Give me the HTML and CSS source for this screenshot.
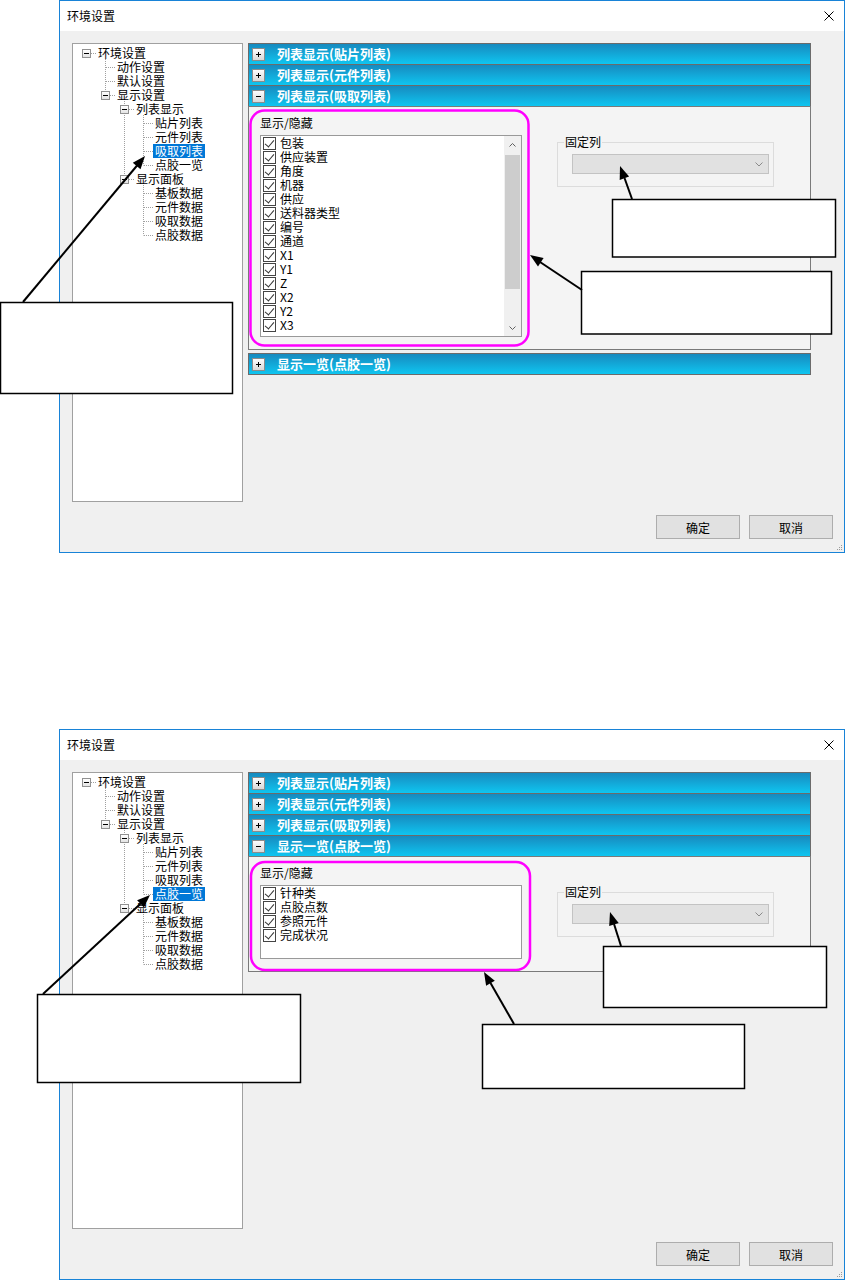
FILE: index.html
```html
<!DOCTYPE html>
<html lang="zh-CN">
<head>
<meta charset="utf-8">
<title>环境设置</title>
<link rel="stylesheet" href="styles.css">
</head>
<body>
<div class="page">

  <section class="dialog">
    <header class="titlebar">
      <span class="title">环境设置</span>
      <svg class="close" width="10" height="10" viewBox="0 0 10 10"><path d="M0.5 0.5L9.5 9.5M9.5 0.5L0.5 9.5" stroke="#000" stroke-width="1"/></svg>
    </header>
    <div class="client">
      <div class="main">
        <div class="tree">
          <svg class="tree-lines" width="169" height="200" viewBox="0 0 169 200">
            <path d="M18 9.5H23M32.5 15V47M33 23.5H42M33 37.5H42M37 51.5H42M51.5 57V131M56 65.5H61M56 135.5H61M70.5 71V121.5M71 79.5H80M71 93.5H80M71 107.5H80M71 121.5H80M70.5 141V191.5M71 149.5H80M71 163.5H80M71 177.5H80M71 191.5H80" stroke="#a0a0a0" stroke-width="1" stroke-dasharray="1 1" fill="none"/>
          </svg>
          <div class="node l0"><span class="twist"><i class="exp"></i></span><span class="label">环境设置</span></div>
          <div class="node l1"><span class="twist"></span><span class="label">动作设置</span></div>
          <div class="node l1"><span class="twist"></span><span class="label">默认设置</span></div>
          <div class="node l1"><span class="twist"><i class="exp"></i></span><span class="label">显示设置</span></div>
          <div class="node l2"><span class="twist"><i class="exp"></i></span><span class="label">列表显示</span></div>
          <div class="node l3"><span class="twist"></span><span class="label">贴片列表</span></div>
          <div class="node l3"><span class="twist"></span><span class="label">元件列表</span></div>
          <div class="node l3"><span class="twist"></span><span class="label sel">吸取列表</span></div>
          <div class="node l3"><span class="twist"></span><span class="label">点胶一览</span></div>
          <div class="node l2"><span class="twist"><i class="exp"></i></span><span class="label">显示面板</span></div>
          <div class="node l3"><span class="twist"></span><span class="label">基板数据</span></div>
          <div class="node l3"><span class="twist"></span><span class="label">元件数据</span></div>
          <div class="node l3"><span class="twist"></span><span class="label">吸取数据</span></div>
          <div class="node l3"><span class="twist"></span><span class="label">点胶数据</span></div>
        </div>
        <div class="accordion">
          <div class="acc-head"><span class="tog plus"></span><span class="acc-title">列表显示(贴片列表)</span></div>
          <div class="acc-head"><span class="tog plus"></span><span class="acc-title">列表显示(元件列表)</span></div>
          <div class="acc-head"><span class="tog"></span><span class="acc-title">列表显示(吸取列表)</span></div>
          <div class="acc-body">
            <div class="col">
              <div class="cap">显示/隐藏</div>
              <div class="listbox tall">
                <ul class="items">
                  <li><span class="cb"></span>包装</li>
                  <li><span class="cb"></span>供应装置</li>
                  <li><span class="cb"></span>角度</li>
                  <li><span class="cb"></span>机器</li>
                  <li><span class="cb"></span>供应</li>
                  <li><span class="cb"></span>送料器类型</li>
                  <li><span class="cb"></span>编号</li>
                  <li><span class="cb"></span>通道</li>
                  <li><span class="cb"></span>X1</li>
                  <li><span class="cb"></span>Y1</li>
                  <li><span class="cb"></span>Z</li>
                  <li><span class="cb"></span>X2</li>
                  <li><span class="cb"></span>Y2</li>
                  <li><span class="cb"></span>X3</li>
                </ul>
                <div class="vscroll">
                  <div class="sb-btn"><svg width="7" height="4" viewBox="0 0 7 4"><path d="M0.5 3.5L3.5 0.5L6.5 3.5" stroke="#606060" fill="none"/></svg></div>
                  <div class="thumb"></div>
                  <div class="sb-fill"></div>
                  <div class="sb-btn"><svg width="7" height="4" viewBox="0 0 7 4"><path d="M0.5 0.5L3.5 3.5L6.5 0.5" stroke="#606060" fill="none"/></svg></div>
                </div>
              </div>
            </div>
            <fieldset class="group">
              <legend>固定列</legend>
              <div class="combo"><svg width="8" height="5" viewBox="0 0 8 5"><path d="M0.5 0.5L4 4L7.5 0.5" stroke="#8a8a8a" fill="none"/></svg></div>
            </fieldset>
          </div>
          <div class="acc-head last"><span class="tog plus"></span><span class="acc-title">显示一览(点胶一览)</span></div>
        </div>
      </div>
      <div class="footer"><button class="btn">确定</button><button class="btn">取消</button></div>
    </div>
    <svg class="grip" width="6" height="6" viewBox="0 0 6 6"><path d="M4 0h1v1H4zM2 2h1v1H2zM4 2h1v1H4zM0 4h1v1H0zM2 4h1v1H2zM4 4h1v1H4z" fill="#9a9a9a"/></svg>
  </section>

  <section class="dialog second">
    <header class="titlebar">
      <span class="title">环境设置</span>
      <svg class="close" width="10" height="10" viewBox="0 0 10 10"><path d="M0.5 0.5L9.5 9.5M9.5 0.5L0.5 9.5" stroke="#000" stroke-width="1"/></svg>
    </header>
    <div class="client">
      <div class="main">
        <div class="tree">
          <svg class="tree-lines" width="169" height="200" viewBox="0 0 169 200">
            <path d="M18 9.5H23M32.5 15V47M33 23.5H42M33 37.5H42M37 51.5H42M51.5 57V131M56 65.5H61M56 135.5H61M70.5 71V121.5M71 79.5H80M71 93.5H80M71 107.5H80M71 121.5H80M70.5 141V191.5M71 149.5H80M71 163.5H80M71 177.5H80M71 191.5H80" stroke="#a0a0a0" stroke-width="1" stroke-dasharray="1 1" fill="none"/>
          </svg>
          <div class="node l0"><span class="twist"><i class="exp"></i></span><span class="label">环境设置</span></div>
          <div class="node l1"><span class="twist"></span><span class="label">动作设置</span></div>
          <div class="node l1"><span class="twist"></span><span class="label">默认设置</span></div>
          <div class="node l1"><span class="twist"><i class="exp"></i></span><span class="label">显示设置</span></div>
          <div class="node l2"><span class="twist"><i class="exp"></i></span><span class="label">列表显示</span></div>
          <div class="node l3"><span class="twist"></span><span class="label">贴片列表</span></div>
          <div class="node l3"><span class="twist"></span><span class="label">元件列表</span></div>
          <div class="node l3"><span class="twist"></span><span class="label">吸取列表</span></div>
          <div class="node l3"><span class="twist"></span><span class="label sel">点胶一览</span></div>
          <div class="node l2"><span class="twist"><i class="exp"></i></span><span class="label">显示面板</span></div>
          <div class="node l3"><span class="twist"></span><span class="label">基板数据</span></div>
          <div class="node l3"><span class="twist"></span><span class="label">元件数据</span></div>
          <div class="node l3"><span class="twist"></span><span class="label">吸取数据</span></div>
          <div class="node l3"><span class="twist"></span><span class="label">点胶数据</span></div>
        </div>
        <div class="accordion">
          <div class="acc-head"><span class="tog plus"></span><span class="acc-title">列表显示(贴片列表)</span></div>
          <div class="acc-head"><span class="tog plus"></span><span class="acc-title">列表显示(元件列表)</span></div>
          <div class="acc-head"><span class="tog plus"></span><span class="acc-title">列表显示(吸取列表)</span></div>
          <div class="acc-head"><span class="tog"></span><span class="acc-title">显示一览(点胶一览)</span></div>
          <div class="acc-body">
            <div class="col">
              <div class="cap">显示/隐藏</div>
              <div class="listbox short">
                <ul class="items">
                  <li><span class="cb"></span>针种类</li>
                  <li><span class="cb"></span>点胶点数</li>
                  <li><span class="cb"></span>参照元件</li>
                  <li><span class="cb"></span>完成状况</li>
                </ul>
              </div>
            </div>
            <fieldset class="group">
              <legend>固定列</legend>
              <div class="combo"><svg width="8" height="5" viewBox="0 0 8 5"><path d="M0.5 0.5L4 4L7.5 0.5" stroke="#8a8a8a" fill="none"/></svg></div>
            </fieldset>
          </div>
        </div>
      </div>
      <div class="footer"><button class="btn">确定</button><button class="btn">取消</button></div>
    </div>
    <svg class="grip" width="6" height="6" viewBox="0 0 6 6"><path d="M4 0h1v1H4zM2 2h1v1H2zM4 2h1v1H4zM0 4h1v1H0zM2 4h1v1H2zM4 4h1v1H4z" fill="#9a9a9a"/></svg>
  </section>

  <svg class="notes" width="847" height="1280" viewBox="0 0 847 1280">
    <g fill="none" stroke="#ff00ff" stroke-width="2.5">
      <rect x="250.5" y="110.5" width="278" height="235" rx="14"/>
      <rect x="251" y="862" width="279" height="108" rx="14"/>
    </g>
    <g fill="#fff" stroke="#000" stroke-width="1.5">
      <rect x="612.5" y="199.5" width="223" height="57.5"/>
      <rect x="581.5" y="271.5" width="250" height="62.5"/>
      <rect x="0.5" y="302.5" width="232" height="91"/>
      <rect x="603.5" y="946.5" width="223" height="61"/>
      <rect x="482.5" y="1024.5" width="262" height="64"/>
      <rect x="37.5" y="994.5" width="263" height="88"/>
    </g>
    <g stroke="#000" stroke-width="2" fill="none">
      <path d="M23 302L137.5 165"/>
      <path d="M582 290L540 262"/>
      <path d="M632 199L624.5 178"/>
      <path d="M43 994L140.5 903.8"/>
      <path d="M514 1024L490.5 983"/>
      <path d="M621 946L614 924"/>
    </g>
    <g fill="#000">
      <polygon points="145,156 140.5,169.2 132.8,162.8"/>
      <polygon points="530,255 543.6,258.1 538,266.4"/>
      <polygon points="620,166 629.1,176.5 619.7,179.9"/>
      <polygon points="150,895 143.9,907.5 137.1,900.2"/>
      <polygon points="484,972 494.8,980.8 486.1,985.8"/>
      <polygon points="610,912 618.7,922.9 609.2,925.9"/>
    </g>
  </svg>
</div>
</body>
</html>
```

FILE: styles.css
```css
* { box-sizing: border-box; }
html, body { margin: 0; padding: 0; background: #fff; }
body {
  font-family: "Noto Sans CJK SC", "Noto Sans", sans-serif;
  font-size: 12px;
  color: #000;
}
.page { position: relative; width: 847px; height: 1280px; overflow: hidden; }

.dialog {
  position: relative;
  width: 786px;
  height: 553px;
  margin-left: 59px;
  border: 1px solid #1883d7;
  background: #f0f0f0;
  display: flex;
  flex-direction: column;
}
.dialog.second { margin-top: 176px; height: 551px; }

.titlebar {
  height: 30px;
  flex: none;
  background: #fff;
  display: flex;
  align-items: center;
  justify-content: space-between;
  padding: 0 10px 0 7px;
  line-height: 14px;
}
.close { display: block; }

.client {
  flex: 1;
  display: flex;
  flex-direction: column;
  padding: 12px 11px 13px 12px;
}
.main { display: flex; align-items: flex-start; gap: 5px; height: 459px; }
.dialog.second .main { height: 457px; }

.tree {
  position: relative;
  width: 171px;
  height: 100%;
  border: 1px solid #a0a0a0;
  background: #fff;
  padding-top: 2px;
}
.tree-lines { position: absolute; left: 0; top: 0; }
.node { display: flex; height: 14px; line-height: 14px; white-space: nowrap; position: relative; }
.node.l0 { padding-left: 4px; }
.node.l1 { padding-left: 23px; }
.node.l2 { padding-left: 42px; }
.node.l3 { padding-left: 61px; }
.twist { width: 19px; flex: none; padding: 3px 0 0 5px; }
.exp {
  display: block;
  position: relative;
  width: 9px;
  height: 9px;
  border: 1px solid #919191;
  background: linear-gradient(#ffffff, #e4e4e4);
}
.exp::after {
  content: "";
  position: absolute;
  left: 1px;
  top: 3px;
  width: 5px;
  height: 1px;
  background: #000;
}
.label { padding: 0 2px; }
.label.sel { background: #0078d7; color: #fff; }

.accordion { width: 563px; display: flex; flex-direction: column; }
.acc-head {
  height: 21px;
  flex: none;
  border: 1px solid #6b6b6b;
  border-bottom: 0;
  background: linear-gradient(#178abf, #0fc5f0);
  display: flex;
  align-items: center;
  padding-left: 3px;
  color: #fff;
  font-weight: 700;
  font-size: 13px;
  line-height: 16px;
}
.acc-head.last { height: 22px; border-bottom: 1px solid #6b6b6b; margin-top: 3px; }
.tog {
  position: relative;
  flex: none;
  width: 13px;
  height: 13px;
  margin-right: 12px;
  border: 1px solid #8c8c8c;
  background: linear-gradient(#fdfdfd, #d8d8d8);
}
.tog::before {
  content: "";
  position: absolute;
  left: 3px;
  top: 5px;
  width: 5px;
  height: 1px;
  background: #000;
}
.tog.plus::after {
  content: "";
  position: absolute;
  left: 5px;
  top: 3px;
  width: 1px;
  height: 5px;
  background: #000;
}

.acc-body {
  border: 1px solid #7a7a7a;
  background: #f4f4f4;
  display: flex;
  align-items: flex-start;
  padding: 9px 0 12px 11px;
}
.cap { line-height: 14px; margin-bottom: 5px; }
.listbox {
  width: 262px;
  border: 1px solid #999;
  background: #fff;
  display: flex;
}
.listbox.tall { height: 202px; }
.listbox.short { height: 74px; }
.items { list-style: none; margin: 0; padding: 0 0 0 2px; flex: 1; }
.items li { height: 14px; line-height: 14px; display: flex; align-items: center; white-space: nowrap; }
.cb {
  position: relative;
  flex: none;
  width: 13px;
  height: 13px;
  margin-right: 4px;
  border: 1px solid #444;
  background: #fff;
}
.cb::after {
  content: "";
  position: absolute;
  left: 3px;
  top: 0;
  width: 4px;
  height: 8px;
  border: solid #333;
  border-width: 0 1px 1px 0;
  transform: rotate(40deg);
}

.vscroll {
  width: 17px;
  flex: none;
  background: #f0f0f0;
  display: flex;
  flex-direction: column;
  align-items: center;
}
.sb-btn { width: 17px; height: 17px; flex: none; display: flex; align-items: center; justify-content: center; }
.thumb { width: 15px; height: 134px; flex: none; margin-top: 2px; background: #cdcdcd; }
.sb-fill { flex: 1; }

.group {
  margin: 19px 0 0 35px;
  padding: 5px 4px 12px 14px;
  border: 1px solid #dcdcdc;
  width: 217px;
  min-width: 0;
}
.group legend { padding: 0 1px; margin-left: -8px; line-height: 14px; }
.combo {
  height: 20px;
  border: 1px solid #c3c3c3;
  background: #e1e1e1;
  display: flex;
  align-items: center;
  justify-content: flex-end;
  padding-right: 5px;
}

.footer { margin-top: 13px; display: flex; justify-content: flex-end; gap: 9px; }
.btn {
  width: 84px;
  height: 24px;
  padding: 0;
  border: 1px solid #adadad;
  background: #e1e1e1;
  font: inherit;
  font-size: 12px;
  color: #000;
}

.grip { position: absolute; right: 1px; bottom: 1px; }

.notes { position: absolute; left: 0; top: 0; pointer-events: none; }
```
